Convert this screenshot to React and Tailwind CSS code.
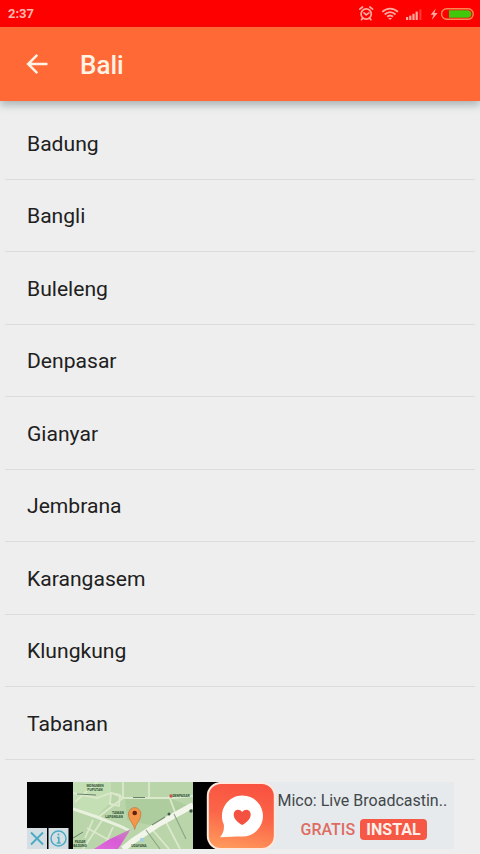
import React from "react";

const regions = [
  "Badung",
  "Bangli",
  "Buleleng",
  "Denpasar",
  "Gianyar",
  "Jembrana",
  "Karangasem",
  "Klungkung",
  "Tabanan",
];

const StatusBar = () => {
  return (
    <div className="flex h-[27px] shrink-0 items-center justify-between bg-[#fe0000] pl-[8px] pr-[4px] text-[#ffb9b0]">
      <span className="text-[13px] font-bold leading-none">2:37</span>
      <svg width="118" height="20" viewBox="0 0 118 20" fill="none">
        {/* alarm */}
        <g stroke="#ffaaa0" strokeWidth="1.7" strokeLinecap="round">
          <circle cx="8.2" cy="10" r="5.1" />
          <path d="M6 8.9l2.2 2 2.7-2M1.8 5.2L4.5 3M14.6 5.2L11.9 3M4.7 14.3l-1.2 1.3M11.7 14.3l1.2 1.3" />
        </g>
        {/* wifi */}
        <g stroke="#ffaaa0" strokeWidth="1.9">
          <path d="M24.3 7.9c4.5-4.4 11.1-4.4 15.6 0" />
          <path d="M26.7 10.5c3.2-3 7.6-3 10.8 0" />
          <path d="M29.2 12.8c1.9-1.7 3.9-1.7 5.8 0" />
        </g>
        <path d="M30.2 14h3.8l-1.9 2.1z" fill="#ffaaa0" />
        {/* signal */}
        <g fill="#ffaaa0">
          <rect x="48" y="13" width="2.2" height="3" />
          <rect x="51.2" y="11.6" width="2.2" height="4.4" />
          <rect x="54.4" y="9.8" width="2.2" height="6.2" />
          <rect x="57.6" y="7.6" width="2.2" height="8.4" />
          <rect x="61.4" y="5.5" width="2" height="10.5" opacity="0.35" />
        </g>
        {/* charging battery */}
        <path d="M77.8 4.5l-5.2 6.2h2.9l-1.7 5.2 5.8-6.9h-3.2z" fill="#ffaaa0" />
        <rect x="83.6" y="4.7" width="31.6" height="10.6" rx="5" stroke="#f58a55" strokeWidth="1.4" />
        <path d="M91 6.2h18.5a3.8 3.8 0 010 7.6H91z" fill="#3fc80c" />
      </svg>
    </div>
  );
};

const AppBar = () => {
  return (
    <header className="z-10 flex h-[74px] shrink-0 items-center bg-[#ff6935] pl-[26px] shadow-[0_4px_8px_rgba(70,90,90,0.4)]">
      <svg width="22" height="22" viewBox="0 0 22 22" fill="none" stroke="#fff3e6" strokeWidth="2.5">
        <path d="M21.5 11H2.5M11.3 1.8L2.1 11l9.2 9.2" />
      </svg>
      <h1 className="ml-[32px] pt-px text-[26px] font-medium leading-none text-[#fff3e6]">Bali</h1>
    </header>
  );
};

const MapPicture = () => {
  return (
    <svg className="shrink-0" width="120" height="67" viewBox="0 0 120 67">
      <defs>
        <linearGradient id="route" x1="0" y1="1" x2="1" y2="0">
          <stop offset="0" stopColor="#de6bdc" />
          <stop offset="0.5" stopColor="#d95bd6" />
          <stop offset="1" stopColor="#c48fb8" />
        </linearGradient>
      </defs>
      <rect width="120" height="67" fill="#b9d5a9" />
      <path d="M0 0h38v20L24 34 0 28z" fill="#c5dfb4" />
      <path d="M52 16h44l20 8-34 20-28-6z" fill="#aecd9f" />
      <g stroke="#dbe8cc" strokeWidth="1.8" fill="none">
        <path d="M0 11l24 5 14-5 14 5h48l20-2M50 0v16L24 36M24 0L2 20M76 0v16M38 11l9 2-1 11-9-2zM10 67l20-30M14 46l22 12M20 38l-8 18M40 45l-10 22M78 46l18 21M93 40l14 27M96 14l6 16" />
      </g>
      <path d="M0 27l24 8 23 9 10 5" stroke="#e8f1dd" strokeWidth="3" fill="none" />
      <path d="M50 67l10-8 24-16 36-20" stroke="#f2f5ea" strokeWidth="6" fill="none" />
      <path d="M73 48l14 19M101 32l12 25" stroke="#8da486" strokeWidth="1.1" fill="none" />
      <path d="M79 43l13-8" stroke="#6f8d6c" strokeWidth="1.2" />
      <path d="M21 67l14-9 23-11-13 20z" fill="url(#route)" />
      <path d="M0 56l10-6M60 15.5h12M4 12l19 1" stroke="#68836a" strokeWidth="1" />
      {/* place labels */}
      <g fill="#2c5036" fontSize="3.4" fontWeight="700" textAnchor="middle">
        <text x="22" y="5">MONUMEN</text>
        <text x="22" y="9">PUPUTAN</text>
        <text x="45" y="32">TAMAN</text>
        <text x="41" y="36">LAPANGAN</text>
        <text x="7" y="61">PASAR</text>
        <text x="7" y="65">BADUNG</text>
        <text x="66" y="65">UDAYANA</text>
        <text x="108" y="15">DENPASAR</text>
      </g>
      <circle cx="98" cy="14" r="1.7" fill="#c95749" />
      <circle cx="96" cy="32" r="1.5" fill="#425e4b" />
      <circle cx="118" cy="29" r="1.7" fill="#425e4b" />
      <circle cx="69" cy="58" r="2.2" fill="#a3cfe0" />
      {/* pin */}
      <path d="M61.7 47.5c-1-6-6.2-9-6.2-15.5a6.2 6.5 0 0112.4 0c0 6.5-5.2 9.5-6.2 15.5z" fill="#f3964a" stroke="#b77238" strokeWidth="0.6" />
      <circle cx="61.7" cy="31" r="2.3" fill="#65200f" />
    </svg>
  );
};

const MicoLogo = () => {
  return (
    <svg className="absolute left-[179px] top-0" width="70" height="68" viewBox="0 0 70 68">
      <defs>
        <linearGradient id="mico" x1="0.6" y1="0" x2="0.4" y2="1">
          <stop offset="0" stopColor="#f95240" />
          <stop offset="0.5" stopColor="#fb6548" />
          <stop offset="1" stopColor="#ff985b" />
        </linearGradient>
      </defs>
      <rect x="1.8" y="1" width="67" height="66" rx="13" fill="url(#mico)" stroke="#fce9df" strokeWidth="2" />
      <path d="M36.5 13.5a20.5 20.5 0 010 41c-7 0-15 .5-22.5.7 3-3.6 4.4-7.2 3.8-12.6A20.5 20.5 0 0136.5 13.5z" fill="#fff" />
      <path d="M36.2 43c-5-3.2-8.5-6.2-8.5-10.6 0-5 5.6-6.4 8.5-2.4 2.9-4 8.5-2.6 8.5 2.4 0 4.4-3.5 7.4-8.5 10.6z" fill="#f45140" />
    </svg>
  );
};

const AdBanner = () => {
  return (
    <div className="relative ml-[27px] mt-[22.5px] flex h-[67px] w-[427px] shrink-0 bg-[#e6eaec]">
      <div className="flex w-[46px] shrink-0 items-end bg-black">
        <svg width="42" height="21" viewBox="0 0 42 21" fill="none">
          <rect width="20" height="21" fill="#d5dfe3" />
          <rect x="21.5" width="20" height="21" fill="#d5dfe3" />
          <path d="M4 4.5l12 12M16 4.5l-12 12" stroke="#4caac2" strokeWidth="1.9" />
          <circle cx="31.5" cy="10.5" r="7.5" stroke="#4caac2" strokeWidth="1.5" />
          <path d="M31.5 5.5v2M30 9.5h1.8V15M29.7 15h4" stroke="#4caac2" strokeWidth="1.6" />
        </svg>
      </div>
      <MapPicture />
      <div className="w-[26px] shrink-0 bg-black" />
      <MicoLogo />
      <div className="ml-[58.5px] flex flex-col pt-[9px]">
        <p className="whitespace-nowrap text-[16px] leading-[20px] text-[#42474b]">
          Mico: Live Broadcastin..
        </p>
        <div className="ml-[23px] mt-[8px] flex items-center">
          <span className="w-[59.5px] text-[16px] font-medium leading-[21px] text-[#de6c63]">GRATIS</span>
          <span className="flex h-[21px] w-[67px] items-center justify-center rounded-[4px] bg-[#f65846] text-[16px] font-bold leading-none text-[#fff0ea]">
            INSTAL
          </span>
        </div>
      </div>
    </div>
  );
};

const App = () => {
  return (
    <div className="flex h-[854px] w-[480px] flex-col overflow-hidden bg-[#eeeeee] font-['Roboto',sans-serif]">
      <StatusBar />
      <AppBar />
      <ul className="mx-[5px] mt-[6px] shrink-0">
        {regions.map((region) => (
          <li
            key={region}
            className="flex h-[72.5px] items-center border-b border-[#dcdcdc] pl-[22px] pt-px text-[21.1px] leading-none text-[#202020]"
          >
            {region}
          </li>
        ))}
      </ul>
      <AdBanner />
    </div>
  );
};

export default App;
